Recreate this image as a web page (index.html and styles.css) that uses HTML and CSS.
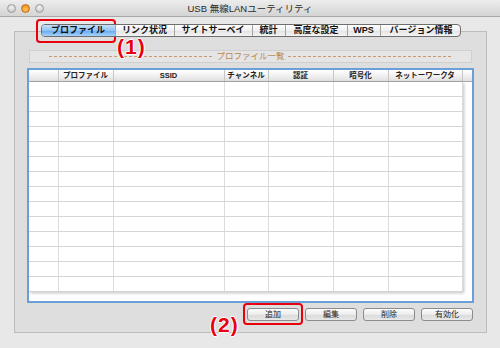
FILE: index.html
```html
<!DOCTYPE html>
<html lang="ja">

<head>
    <meta charset="UTF-8">
    <meta name="viewport" content="width=device-width, initial-scale=1.0">
    <title>USB 無線LANユーティリティ</title>
    <link rel="stylesheet" href="styles.css">
</head>

<body>
    <div class="window">
        <div class="titlebar">
            <div class="lights">
                <span class="light"></span>
                <span class="light light-min"></span>
                <span class="light"></span>
            </div>
            <div class="title">USB 無線LANユーティリティ</div>
        </div>

        <div class="content">
            <div class="tabs">
                <div class="tab active">プロファイル</div>
                <div class="tab">リンク状況</div>
                <div class="tab">サイトサーベイ</div>
                <div class="tab">統計</div>
                <div class="tab">高度な設定</div>
                <div class="tab">WPS</div>
                <div class="tab">バージョン情報</div>
            </div>

            <div class="panel">
                <div class="group-label">
                    <span class="dash"></span>
                    <span class="label-text">プロファイル一覧</span>
                    <span class="dash"></span>
                </div>

                <div class="list-frame">
                    <table class="list-head">
                        <colgroup>
                            <col class="c0"><col class="c1"><col class="c2"><col class="c3">
                            <col class="c4"><col class="c5"><col class="c6"><col class="c7">
                        </colgroup>
                        <tr>
                            <th></th>
                            <th>プロファイル</th>
                            <th>SSID</th>
                            <th>チャンネル</th>
                            <th>認証</th>
                            <th>暗号化</th>
                            <th>ネットーワークタ</th>
                            <th class="corner"></th>
                        </tr>
                    </table>
                    <table class="list-body">
                        <colgroup>
                            <col class="c0"><col class="c1"><col class="c2"><col class="c3">
                            <col class="c4"><col class="c5"><col class="c6">
                        </colgroup>
                        <tr><td></td><td></td><td></td><td></td><td></td><td></td><td></td></tr>
                        <tr><td></td><td></td><td></td><td></td><td></td><td></td><td></td></tr>
                        <tr><td></td><td></td><td></td><td></td><td></td><td></td><td></td></tr>
                        <tr><td></td><td></td><td></td><td></td><td></td><td></td><td></td></tr>
                        <tr><td></td><td></td><td></td><td></td><td></td><td></td><td></td></tr>
                        <tr><td></td><td></td><td></td><td></td><td></td><td></td><td></td></tr>
                        <tr><td></td><td></td><td></td><td></td><td></td><td></td><td></td></tr>
                        <tr><td></td><td></td><td></td><td></td><td></td><td></td><td></td></tr>
                        <tr><td></td><td></td><td></td><td></td><td></td><td></td><td></td></tr>
                        <tr><td></td><td></td><td></td><td></td><td></td><td></td><td></td></tr>
                        <tr><td></td><td></td><td></td><td></td><td></td><td></td><td></td></tr>
                        <tr><td></td><td></td><td></td><td></td><td></td><td></td><td></td></tr>
                        <tr><td></td><td></td><td></td><td></td><td></td><td></td><td></td></tr>
                        <tr><td></td><td></td><td></td><td></td><td></td><td></td><td></td></tr>
                    </table>
                </div>

                <div class="buttons">
                    <button class="btn">追加</button>
                    <button class="btn">編集</button>
                    <button class="btn">削除</button>
                    <button class="btn">有効化</button>
                </div>
            </div>
        </div>

        <!-- callouts -->
        <div class="mark mark-tab"></div>
        <div class="num num-1">(1)</div>
        <div class="mark mark-add"></div>
        <div class="num num-2">(2)</div>
    </div>
</body>

</html>
```

FILE: styles.css
```css
* {
    margin: 0;
    padding: 0;
    box-sizing: border-box;
}

body {
    font-family: "Liberation Sans", "Noto Sans CJK JP", sans-serif;
    background-color: #e8e8e8;
    width: 500px;
    height: 348px;
    overflow: hidden;
}

.window {
    position: relative;
    height: 348px;
    background-color: #e8e8e8;
}

/* title bar */
.titlebar {
    display: grid;
    grid-template-columns: 1fr auto 1fr;
    align-items: center;
    height: 17px;
    background: linear-gradient(#ededed, #d4d4d4);
    border-bottom: 1px solid #a6a6a6;
}

.lights {
    display: flex;
    gap: 5px;
    padding-left: 7px;
}

.light {
    width: 9px;
    height: 9px;
    border-radius: 50%;
    border: 1px solid #9c9c9c;
    background: radial-gradient(circle at 50% 35%, #f4f4f4, #bcbcbc);
}

.light-min {
    border-color: #c0701a;
    background: radial-gradient(circle at 50% 65%, #ffc460, #e67e10);
}

.title {
    font-size: 9.5px;
    color: #2a2a2a;
}

.content {
    padding: 7px 13px 0 14px;
}

/* tabs */
.tabs {
    position: relative;
    z-index: 1;
    display: grid;
    grid-template-columns: 73px 59px 78px 33px 62px 33px 82px;
    width: 420px;
    height: 13px;
    margin: 0 auto -6px;
    border: 1px solid #6e6e6e;
    border-radius: 4px;
    overflow: hidden;
    background: linear-gradient(#ffffff, #efefef 50%, #e2e2e2 51%, #f4f4f4);
}

.tab {
    display: flex;
    align-items: center;
    justify-content: center;
    font-size: 9px;
    font-weight: bold;
    color: #111;
    line-height: 1;
    border-left: 1px solid #a4a4a4;
}

.tab:first-child {
    border-left: none;
}

.tab.active {
    background: linear-gradient(#c6e0f9, #92c4f2 50%, #64a8ec 51%, #a4d3fb);
}

/* panel */
.panel {
    background-color: #dedede;
    border: 1px solid #bdbdbd;
    padding: 18px 12px 11px;
}

.group-label {
    display: flex;
    align-items: center;
    height: 13px;
    margin: 0 2px;
    padding: 0 19px;
    background-color: #e5e5e5;
    border: 1px solid #d0d0d0;
    font-size: 8.5px;
    color: #b8854f;
}

.dash {
    flex: 1;
    height: 1px;
    background: repeating-linear-gradient(90deg, #c99a72 0 3px, transparent 3px 5px);
}

.label-text {
    padding: 0 3px;
    line-height: 1;
}

/* list */
.list-frame {
    margin-top: 5px;
    height: 235px;
    border: 2px solid #6a9fd9;
    background-color: #fff;
    overflow: hidden;
}

table {
    border-collapse: collapse;
    table-layout: fixed;
}

.list-head {
    width: 443px;
}

.list-body {
    width: 433px;
    box-shadow: 1px 1px 3px rgba(0, 0, 0, 0.25);
}

.c0 { width: 29px; }
.c1 { width: 55px; }
.c2 { width: 111px; }
.c3 { width: 44px; }
.c4 { width: 65px; }
.c5 { width: 55px; }
.c6 { width: 74px; }
.c7 { width: 10px; }

th {
    height: 11px;
    padding: 0;
    font-size: 7.5px;
    font-weight: bold;
    color: #222;
    line-height: 1;
    white-space: nowrap;
    overflow: hidden;
    background: linear-gradient(#ffffff, #eeeeee 60%, #e0e0e0);
    border-right: 1px solid #c6c6c6;
    border-bottom: 1px solid #a9a9a9;
}

th.corner {
    border-right: none;
}

td {
    height: 15px;
    border-right: 1px solid #dcdcdc;
    border-bottom: 1px solid #d6d6d6;
}

/* buttons */
.buttons {
    display: flex;
    justify-content: flex-end;
    gap: 6px;
    margin: 5px 1px 0 0;
}

.btn {
    width: 52px;
    height: 13px;
    font-family: inherit;
    font-size: 8px;
    line-height: 11px;
    color: #222;
    border: 1px solid #8c8c8c;
    border-radius: 3px;
    background: linear-gradient(#fdfdfd, #ececec 50%, #d9d9d9 51%, #e8e8e8);
}

/* red callouts */
.mark {
    position: absolute;
    border: 2.5px solid #e8000d;
    border-radius: 4px;
}

.mark-tab {
    left: 36px;
    top: 19px;
    width: 80px;
    height: 24px;
}

.mark-add {
    left: 243px;
    top: 303px;
    width: 60px;
    height: 22px;
}

.num {
    position: absolute;
    font-family: "Liberation Sans", sans-serif;
    font-size: 21px;
    font-weight: bold;
    line-height: 20px;
    letter-spacing: 1px;
    color: #e8000d;
    text-shadow: -1px 0 #fff, 1px 0 #fff, 0 -1px #fff, 0 1px #fff;
}

.num-1 {
    left: 117px;
    top: 37px;
}

.num-2 {
    left: 210px;
    top: 315px;
}
```
